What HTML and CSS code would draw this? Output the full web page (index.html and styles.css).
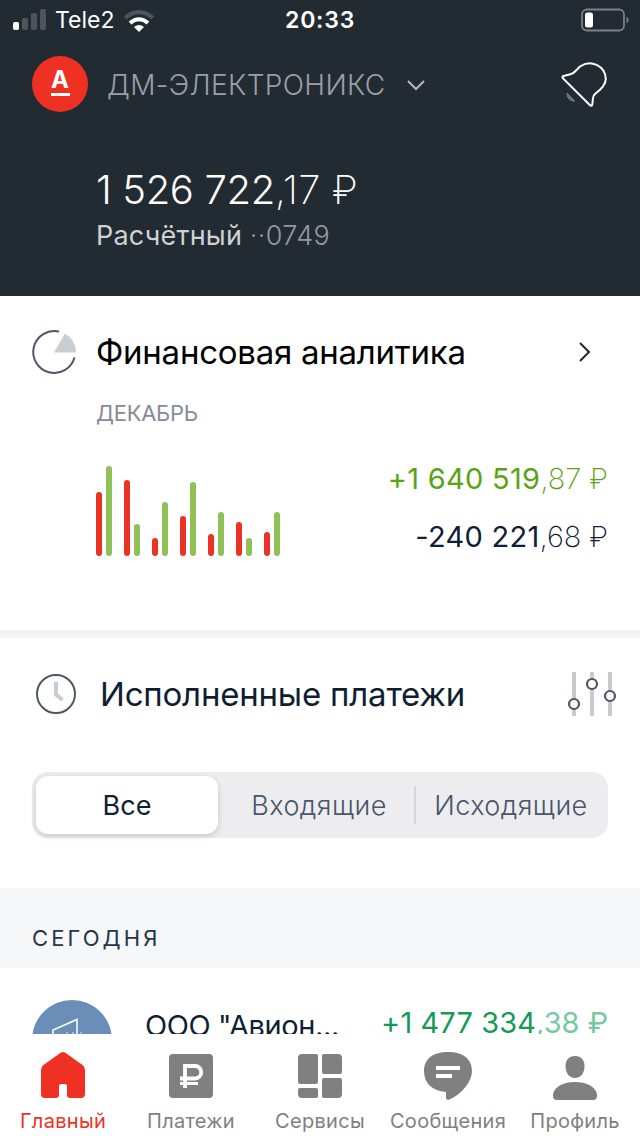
FILE: index.html
```html
<!DOCTYPE html>
<html lang="ru">
<head>
<meta charset="utf-8">
<title>Главный</title>
<link rel="stylesheet" href="styles.css">
</head>
<body>
<div class="app">
  <header class="header">
    <div class="status">
      <svg class="signal" width="34" height="22" viewBox="0 0 34 22"><rect x="0" y="14" width="6" height="8" rx="1.8" fill="#fff"/><g fill="#4d555b"><rect x="9" y="10" width="6" height="12" rx="1.8"/><rect x="18" y="5" width="6" height="17" rx="1.8"/><rect x="27" y="1" width="6" height="21" rx="1.8"/></g></svg>
      <span class="carrier">Tele2</span>
      <svg class="wifi" width="32" height="24" viewBox="0 0 32 24" fill="none"><path d="M2.200 8.800Q16-2.600 29.800 8.800" stroke="#4d555b" stroke-width="4"/><path d="M7 14Q16 6.400 25 14" stroke="#fff" stroke-width="4"/><path d="M11 18Q16 14 21 18L16 23Z" fill="#fff"/></svg>
      <span class="time">20:33</span>
      <svg class="battery" width="50" height="24" viewBox="0 0 50 24"><rect x="2" y="1.500" width="42" height="21" rx="5" fill="none" stroke="#7b8187" stroke-width="1.800"/><rect x="5" y="4.500" width="8" height="15" rx="2.500" fill="#fff"/><path d="M46.500 8.500Q51 12 46.500 15.500Z" fill="#7b8187"/></svg>
    </div>
    <div class="account">
      <span class="logo"><span class="logo-letter">А</span><span class="logo-line"></span></span>
      <span class="company">ДМ-ЭЛЕКТРОНИКС</span>
      <svg class="chevron-down" width="20" height="12" viewBox="0 0 20 12"><path d="M2 2L10 10L18 2" fill="none" stroke="#b5b9bd" stroke-width="2"/></svg>
      <svg class="bell" width="50" height="50" viewBox="0 0 50 50"><path d="M9 33A7 7 0 0 0 17 41Z" fill="#69717b" stroke="#69717b" stroke-width="1"/><path d="M5.500 16Q3.500 17 5.300 18.600L31.500 44.800Q33.800 47 34.300 44.500L35 38Q35.300 35.500 37 34C43 29.500 47.800 25 47.800 19A16.200 16.200 0 0 0 22 6.500L17 11.500Q15 13.800 12.500 14.200Z" fill="none" stroke="#fff" stroke-width="2" stroke-linejoin="round"/></svg>
    </div>
    <div class="balance"><span class="balance-main">1 526 722</span><span class="balance-frac">,17 ₽</span></div>
    <div class="balance-name"><span class="kind">Расчётный</span> <span class="number">··0749</span></div>
  </header>

  <section class="analytics">
    <div class="analytics-head">
      <svg class="pie" width="46" height="46" viewBox="0 0 46 46"><path d="M28 2.500A21 21 0 1 0 43.500 28.500" fill="none" stroke="#4c5768" stroke-width="2"/><path d="M23 23.500L34 4.500A22 22 0 0 1 45 23.500Z" fill="#c9ced3"/></svg>
      <h2 class="title analytics-title">Финансовая аналитика</h2>
      <svg class="chevron-right" width="14" height="22" viewBox="0 0 14 22"><path d="M2 2L11 11L2 20" fill="none" stroke="#1c2634" stroke-width="2"/></svg>
    </div>
    <div class="month">ДЕКАБРЬ</div>
    <div class="analytics-data">
      <div class="chart">
        <div class="pair"><i class="bar out" style="height:64px"></i><i class="bar in" style="height:90px"></i></div>
        <div class="pair"><i class="bar out" style="height:76px"></i><i class="bar in" style="height:32px"></i></div>
        <div class="pair"><i class="bar out" style="height:18px"></i><i class="bar in" style="height:54px"></i></div>
        <div class="pair"><i class="bar out" style="height:40px"></i><i class="bar in" style="height:74px"></i></div>
        <div class="pair"><i class="bar out" style="height:22px"></i><i class="bar in" style="height:44px"></i></div>
        <div class="pair"><i class="bar out" style="height:34px"></i><i class="bar in" style="height:18px"></i></div>
        <div class="pair"><i class="bar out" style="height:24px"></i><i class="bar in" style="height:44px"></i></div>
      </div>
      <div class="totals">
        <div class="total income"><span class="sum">+1 640 519</span><span class="frac">,87 ₽</span></div>
        <div class="total expense"><span class="sum">-240 221</span><span class="frac">,68 ₽</span></div>
      </div>
    </div>
  </section>

  <section class="payments">
    <div class="payments-head">
      <svg class="clock" width="42" height="42" viewBox="0 0 42 42" fill="none"><circle cx="21" cy="21" r="19" stroke="#4c5965" stroke-width="2"/><path d="M21 9V21.500L27.500 27" stroke="#c9ccd2" stroke-width="4"/></svg>
      <h2 class="title payments-title">Исполненные платежи</h2>
      <svg class="sliders" width="52" height="44" viewBox="0 0 52 44"><path d="M8 0V44M26 0V44M44 0V44" stroke="#c8cacf" stroke-width="4"/><g fill="#fff" stroke="#4c5764" stroke-width="2.200"><circle cx="8" cy="32" r="5"/><circle cx="26" cy="12" r="5"/><circle cx="44" cy="24" r="5"/></g></svg>
    </div>
    <div class="segments">
      <div class="segment active">Все</div>
      <div class="segment incoming">Входящие</div>
      <div class="segment outgoing">Исходящие</div>
    </div>
  </section>

  <div class="day">СЕГОДНЯ</div>
  <div class="operation">
    <svg class="avatar" width="80" height="80" viewBox="0 0 80 80"><circle cx="40" cy="40" r="40" fill="#6a8eb8"/><path d="M21 54V30L45 19.500V54" fill="none" stroke="#fff" stroke-width="1.500"/><path d="M35 32V50M41 32V50M49 32V50" stroke="#a7bdd6" stroke-width="2"/></svg>
    <span class="payer">ООО "Авион...</span>
    <span class="received"><span class="received-sum">+1 477 334</span><span class="received-frac">,38 ₽</span></span>
  </div>

  <nav class="tabs">
    <div class="tab current">
      <svg width="48" height="48" viewBox="0 0 48 48"><path d="M22 2.600Q24 1.400 26 2.600L43.500 15Q46 16.800 46 20V44Q46 48 42 48H31Q28 48 28 45V36Q28 34 26 34H22Q20 34 20 36V45Q20 48 17 48H6Q2 48 2 44V20Q2 16.800 4.500 15Z" fill="currentColor"/></svg>
      <span class="tab-label">Главный</span>
    </div>
    <div class="tab">
      <svg width="48" height="48" viewBox="0 0 48 48"><rect x="2" y="4" width="44" height="44" rx="4" fill="currentColor"/><path d="M18 38V16H28A5.700 5.700 0 0 1 28 28.500H13" fill="none" stroke="#fff" stroke-width="3.800"/><path d="M13 33.500H31" stroke="#fff" stroke-width="3"/></svg>
      <span class="tab-label">Платежи</span>
    </div>
    <div class="tab middle">
      <svg width="48" height="48" viewBox="0 0 48 48" fill="currentColor"><path d="M6 4H20Q22 4 22 6V32Q22 34 20 34H4Q2 34 2 32V8Q2 4 6 4ZM28 4H42Q46 4 46 8V22Q46 24 44 24H28Q26 24 26 22V6Q26 4 28 4ZM28 28H44Q46 28 46 30V44Q46 48 42 48H28Q26 48 26 46V30Q26 28 28 28ZM4 38H20Q22 38 22 40V46Q22 48 20 48H6Q2 48 2 44V40Q2 38 4 38Z"/></svg>
      <span class="tab-label">Сервисы</span>
    </div>
    <div class="tab middle">
      <svg width="48" height="48" viewBox="0 0 48 48"><path d="M24 2C39 2 48 9 48 21C48 31 39 43 26 49.300Q22 51 22 47.500V42C8 41 0 33 0 21C0 9 9 2 24 2Z" fill="currentColor"/><path d="M12 16H36V20H12ZM12 24H28V28H12Z" fill="#fff"/></svg>
      <span class="tab-label">Сообщения</span>
    </div>
    <div class="tab">
      <svg width="48" height="48" viewBox="0 0 48 48" fill="currentColor"><path d="M24 6C30 6 33.500 10 33.500 16C33.500 23 30 28 24 28S14.500 23 14.500 16C14.500 10 18 6 24 6Z"/><path d="M2 44C4 36 13 32 24 32S44 36 46 44V46Q46 50 42 50H6Q2 50 2 46Z"/></svg>
      <span class="tab-label">Профиль</span>
    </div>
  </nav>
</div>
</body>
</html>
```
FILE: styles.css
```css
* { box-sizing: border-box; }
body { margin: 0; font-family: Inter, "Noto Sans", sans-serif; background: #fff; color: #0f1f33; }
.app { width: 640px; height: 1136px; display: flex; flex-direction: column; overflow: hidden; white-space: nowrap; }
svg { display: block; flex: none; overflow: visible; }

.header { height: 296px; flex: none; background: #232b32; color: #fff; }
.status { height: 40px; display: flex; align-items: center; padding: 0 10px 0 13px; }
.signal { margin-bottom: 3px; }
.carrier { width: 62px; margin-left: 8px; font-size: 23px; }
.wifi { margin-left: 6px; margin-bottom: -1px; }
.time { width: 72px; margin-left: 130px; font-size: 23px; font-weight: 600; letter-spacing: .8px; }
.battery { margin-left: auto; margin-bottom: 1px; }
.account { height: 90px; display: flex; align-items: center; padding: 0 30px 0 32px; }
.logo { width: 56px; height: 56px; margin-top: -2px; border-radius: 50%; background: #ef3124; display: flex; flex-direction: column; align-items: center; }
.logo-letter { height: 24px; margin-top: 12px; font-size: 24px; line-height: 24px; font-weight: 700; }
.logo-line { width: 19px; height: 3px; margin-top: 1px; background: #fff; }
.company { width: 279px; margin-left: 19px; font-size: 28px; font-weight: 300; letter-spacing: .35px; color: #9b9fa8; }
.chevron-down { margin-left: 20px; }
.bell { margin-left: auto; margin-right: 2px; }
.balance { margin: 36px 0 0 96px; height: 48px; line-height: 47px; font-size: 40px; }
.balance-main { font-weight: 350; letter-spacing: -.35px; }
.balance-frac { font-weight: 200; letter-spacing: .3px; }
.balance-name { margin-left: 96px; height: 44px; line-height: 44px; font-size: 27px; }
.kind { color: #cfd2d5; font-weight: 400; letter-spacing: .2px; }
.number { color: #9499a1; font-weight: 300; letter-spacing: .4px; }

.title { margin: 0; font-size: 33px; line-height: 40px; font-weight: 400; }
.analytics { height: 342px; flex: none; border-bottom: 8px solid #f3f3f4; }
.analytics-head { display: flex; align-items: center; height: 112px; padding: 0 48px 0 31px; }
.analytics-title { margin-left: 19px; color: #000; letter-spacing: -.25px; }
.chevron-right { margin-left: auto; }
.month { margin: -10px 0 0 96px; height: 30px; line-height: 30px; font-size: 22px; letter-spacing: -.3px; color: #858c98; }
.analytics-data { display: flex; justify-content: space-between; padding: 18px 32px 0 96px; }
.chart { display: flex; gap: 12px; align-items: flex-end; height: 110px; }
.pair { display: flex; gap: 4px; align-items: flex-end; }
.bar { width: 6px; border-radius: 3px; }
.out { background: #eb3225; }
.in { background: #90c155; }
.totals { display: flex; flex-direction: column; text-align: right; padding-top: 4px; }
.total { font-size: 29px; height: 58px; line-height: 58px; }
.sum { letter-spacing: .3px; }
.frac { font-weight: 200; }
.income { color: #5aa314; }
.expense { color: #0e2037; }

.payments { height: 250px; flex: none; }
.payments-head { display: flex; align-items: center; height: 112px; padding: 0 22px 0 35px; }
.payments-title { margin-left: 23px; letter-spacing: -.2px; }
.sliders { margin-left: auto; }
.segments { display: flex; align-items: center; height: 66px; margin: 22px 32px 0; padding: 4px; border-radius: 16px; background: #ededef; font-size: 27px; }
.segment { height: 58px; line-height: 60px; text-align: center; color: #48566b; font-weight: 300; letter-spacing: .45px; }
.active { width: 182px; border-radius: 12px; background: #fff; color: #0f1f33; font-weight: 400; letter-spacing: 0; box-shadow: 0 2px 6px rgba(0,0,0,.16); }
.incoming { width: 196px; padding-left: 6px; }
.outgoing { flex: 1; height: 38px; line-height: 40px; padding-left: 2px; border-left: 2px solid #d4d6da; }

.day { height: 80px; flex: none; padding: 20px 32px 0; line-height: 60px; font-size: 22px; letter-spacing: 3.1px; background: #f6f7f8; color: #24364b; }
.operation { height: 66px; flex: none; overflow: hidden; display: flex; align-items: flex-start; padding: 0 32px; }
.avatar { margin-top: 32px; }
.payer { margin: 38px 0 0 33px; line-height: 40px; font-size: 29px; letter-spacing: -.4px; }
.received { margin: 44px 0 0 auto; line-height: 22px; font-size: 29px; color: #159957; }
.received-sum { letter-spacing: .1px; }
.received-frac { color: #76c9a0; }

.tabs { height: 102px; flex: none; display: flex; background: #fff; color: #808080; }
.tab { width: 128px; display: flex; flex-direction: column; align-items: center; padding: 16px 2px 0 0; }
.middle { padding-right: 0; }
.tab-label { margin-top: 10px; line-height: 26px; font-size: 20px; letter-spacing: .3px; }
.current { color: #ef3124; }
```
